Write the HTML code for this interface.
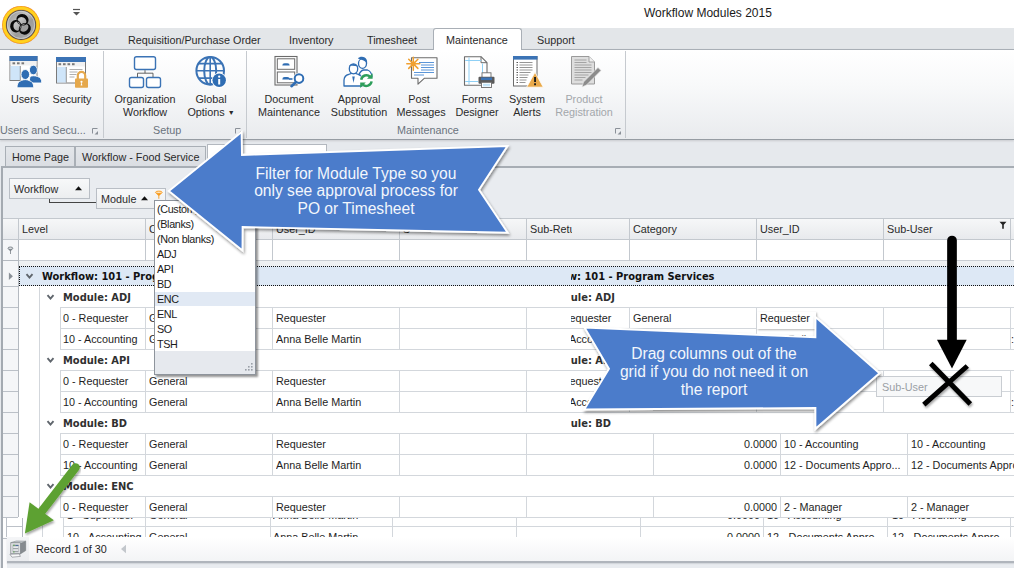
<!DOCTYPE html>
<html><head><meta charset="utf-8"><title>Workflow Modules 2015</title>
<style>
*{box-sizing:border-box;margin:0;padding:0}
html,body{width:1014px;height:568px;overflow:hidden;background:#e6e9ed}
body{position:relative;font-family:"Liberation Sans",sans-serif;font-size:10.8px;color:#1e1e1e}
.abs{position:absolute}
.t{position:absolute;white-space:nowrap;line-height:13px}
.b{font-family:"DejaVu Sans Condensed","DejaVu Sans","Liberation Sans",sans-serif;font-weight:bold;font-size:11px;color:#303030}
#titlebar{left:0;top:0;width:1014px;height:28px;background:#fff}
#tabbar{left:0;top:28px;width:1014px;height:22px;background:#e3e6e9}
#ribbon{left:0;top:49px;width:1014px;height:91px;background:linear-gradient(#ffffff 0%,#f8f9fa 40%,#e9ebee 100%);border-top:1px solid #a9afb6;border-bottom:1px solid #969ca3;box-shadow:0 1px 2px rgba(0,0,0,.13)}
.rtab{position:absolute;top:34px;white-space:nowrap;line-height:13px;color:#2a2a2a}
#acttab{left:433px;top:28px;width:89px;height:22px;background:#fff;border:1px solid #a9afb6;border-bottom:none;border-radius:3px 3px 0 0}
.sep{position:absolute;top:51px;width:1px;height:87px;background:#c6cacf}
.glabel{position:absolute;top:124px;white-space:nowrap;line-height:13px;color:#6a737d}
.blabel{position:absolute;text-align:center;white-space:nowrap;line-height:13px;top:93px;transform:translateX(-50%);color:#2a2a2a}
.dis{color:#a3a7ab}
.hl{position:absolute;height:1px;background:#d3d7dc}
.vl{position:absolute;width:1px;background:#d3d7dc}
.cell{position:absolute;white-space:nowrap;line-height:13px;overflow:hidden}
.pi{position:absolute;left:157px;white-space:nowrap;line-height:14px;font-size:10.8px;letter-spacing:-.35px;color:#1a1a1a}
</style></head><body>
<div id="titlebar" class="abs"></div>
<div class="t" style="left:644px;top:6px;font-size:12px;line-height:14px;color:#1a1a1a">Workflow Modules 2015</div>
<div id="tabbar" class="abs"></div>
<div id="ribbon" class="abs"></div>
<div id="acttab" class="abs"></div>
<div class="rtab" style="left:64px">Budget</div>
<div class="rtab" style="left:128px">Requisition/Purchase Order</div>
<div class="rtab" style="left:289px">Inventory</div>
<div class="rtab" style="left:367px">Timesheet</div>
<div class="rtab" style="left:446px">Maintenance</div>
<div class="rtab" style="left:537px">Support</div>
<div class="sep" style="left:103px"></div>
<div class="sep" style="left:246px"></div>
<div class="sep" style="left:625px"></div>
<div class="glabel" style="left:0px">Users and Secu...</div>
<div class="glabel" style="left:153px">Setup</div>
<div class="glabel" style="left:397px">Maintenance</div>
<div class="blabel" style="left:25px">Users</div>
<div class="blabel" style="left:72px">Security</div>
<div class="blabel" style="left:145px">Organization<br>Workflow</div>
<div class="blabel" style="left:211px">Global<br>Options <span style="font-size:7px;position:relative;top:-1px">&#9660;</span></div>
<div class="blabel" style="left:289px">Document<br>Maintenance</div>
<div class="blabel" style="left:359px">Approval<br>Substitution</div>
<div class="blabel" style="left:421px"><span style="position:relative;left:-2px">Post</span><br>Messages</div>
<div class="blabel" style="left:477px">Forms<br>Designer</div>
<div class="blabel" style="left:527px">System<br>Alerts</div>
<div class="blabel dis" style="left:584px">Product<br>Registration</div>
<svg class="abs" style="left:0;top:0" width="640" height="140" viewBox="0 0 640 140">
<defs>
<radialGradient id="lgR" cx="50%" cy="50%" r="50%"><stop offset="0" stop-color="#f5a31c"/><stop offset=".79" stop-color="#f5a31c"/><stop offset=".84" stop-color="#ffd320"/><stop offset=".93" stop-color="#ffd01c"/><stop offset=".975" stop-color="#f7a21a"/><stop offset="1" stop-color="#ea7a1a"/></radialGradient>
<linearGradient id="lgD" x1="0" y1="0" x2="1" y2="1"><stop offset="0" stop-color="#8a8a8a"/><stop offset=".4" stop-color="#c4c4c4"/><stop offset=".6" stop-color="#9a9a9a"/><stop offset="1" stop-color="#b5b5b5"/></linearGradient>
</defs>
<!-- logo -->
<circle cx="21.050" cy="24.900" r="19" fill="url(#lgR)"/>
<circle cx="21.050" cy="24.900" r="15" fill="#4a4a4a"/>
<circle cx="21.050" cy="24.900" r="14.200" fill="url(#lgD)"/>
<circle cx="21.050" cy="24.900" r="13.600" fill="none" stroke="#d9d9d9" stroke-width=".8" opacity=".8"/>
<g fill="#0a0a0a" fill-rule="evenodd">
<path id="bl" d="M16.300 19.700a6.200 5.700 0 1 0 12.400 0a6.200 5.700 0 1 0-12.400 0zM17.900 21a4.600 3.700 0 1 0 9.200 0a4.600 3.700 0 1 0-9.200 0z" transform="rotate(25 22.5 19.700)"/>
<use href="#bl" transform="rotate(120 21.050 24.900)"/>
<use href="#bl" transform="rotate(240 21.050 24.900)"/>
</g>
<!-- QAT -->
<path d="M73 9.500h7" stroke="#555" stroke-width="1.200"/><path d="M73 12h7l-3.500 3.500z" fill="#555"/>
<!-- Users -->
<rect x="10" y="56.500" width="27" height="24" fill="#fff" stroke="#7a7a7a" stroke-width="1"/>
<rect x="9.500" y="56" width="28" height="5" fill="#3b73b5"/>
<rect x="10.500" y="61" width="26" height="4.500" fill="#f1f1f1"/>
<rect x="12.500" y="62.300" width="2.600" height="2" fill="#7a7a7a"/><rect x="17" y="62.300" width="2.600" height="2" fill="#7a7a7a"/><rect x="21.500" y="62.300" width="2.600" height="2" fill="#7a7a7a"/>
<rect x="10.500" y="66" width="9.500" height="14" fill="#cfe5f9"/>
<path d="M20.300 66v14" stroke="#7a7a7a" stroke-width=".8"/>
<g fill="#2f6db3" stroke="#fff" stroke-width=".9">
<ellipse cx="33.400" cy="70" rx="4" ry="4.800"/>
<path d="M30 76.500c2-1 5-1 7.500 0 3 .8 4.300 3 4.300 6.500h-13z"/>
<ellipse cx="25.300" cy="74.500" rx="4.300" ry="5"/>
<path d="M17 87.800c0-4 1.200-6.500 4.500-7.300 2-1.200 5.500-1.200 7.500 0 3.400.8 4.800 3.300 4.800 7.300z"/>
</g>
<!-- Security -->
<rect x="56.500" y="57.500" width="29" height="25.500" fill="#fff" stroke="#7a7a7a" stroke-width="1"/>
<rect x="56" y="57" width="30" height="5" fill="#3b73b5"/>
<rect x="57" y="62" width="28" height="4.500" fill="#f1f1f1"/>
<rect x="58.500" y="63.200" width="2.600" height="2" fill="#7a7a7a"/><rect x="63" y="63.200" width="2.600" height="2" fill="#7a7a7a"/><rect x="67.500" y="63.200" width="2.600" height="2" fill="#7a7a7a"/><rect x="72" y="63.200" width="2.600" height="2" fill="#7a7a7a"/>
<rect x="57" y="67" width="9" height="15.500" fill="#cfe5f9"/>
<path d="M66.300 67v15.500" stroke="#7a7a7a" stroke-width=".8"/>
<path d="M69.500 69.500h13M69.500 72h8M69.500 74.500h7M69.500 77h5" stroke="#9a9a9a" stroke-width=".8"/>
<path d="M77.800 79v-3.300a3.700 3.900 0 0 1 7.400 0V79" fill="none" stroke="#e5a84c" stroke-width="2.200"/>
<rect x="75" y="78.500" width="13" height="9.300" rx=".8" fill="#e5a84c"/>
<circle cx="81.500" cy="81.800" r="1.100" fill="#fff"/><path d="M81.500 82l-.9 3.500h1.800z" fill="#fff"/>
<!-- Organization Workflow -->
<g fill="#fff" stroke="#3b73b5" stroke-width="1.400">
<rect x="134.500" y="56.700" width="21" height="12.800" rx="2"/>
<rect x="129.500" y="77.500" width="14" height="10" rx="2"/>
<rect x="146.500" y="77.500" width="14" height="10" rx="2"/>
</g>
<path d="M145 70.200v3M137.500 77v-3.800h15.500V77" fill="none" stroke="#555" stroke-width=".9"/>
<!-- Global options -->
<g fill="none" stroke="#3b73b5" stroke-width="2">
<circle cx="210.200" cy="70.800" r="13.800"/>
<ellipse cx="210.200" cy="70.800" rx="6" ry="13.800"/>
<path d="M210.200 57v27.600M196.400 70.800h27.600M198.700 63.600h23M198.700 78.100h23" stroke-width="1.600"/>
</g>
<circle cx="219.200" cy="80.300" r="7.600" fill="#fff"/>
<circle cx="219.200" cy="80.300" r="6.700" fill="#2f6db3"/>
<rect x="218.200" y="79" width="2" height="5.500" fill="#fff"/><circle cx="219.200" cy="76.700" r="1.150" fill="#fff"/>
<!-- Document Maintenance -->
<rect x="275" y="56.500" width="22" height="28.500" fill="#fff" stroke="#6b6b6b" stroke-width="1.100"/>
<rect x="277.300" y="58.800" width="17.400" height="10.500" fill="#fff" stroke="#6b6b6b" stroke-width="1"/>
<rect x="277.300" y="72" width="17.400" height="10.800" fill="#fff" stroke="#6b6b6b" stroke-width="1"/>
<path d="M282.300 65.600a2.300 2.300 0 0 1 2.300-2.300h2.800a2.300 2.300 0 0 1 2.300 2.300z" fill="#2f6db3"/>
<path d="M282.300 79.400a2.300 2.300 0 0 1 2.300-2.300h2.800a2.300 2.300 0 0 1 2.300 2.300z" fill="#2f6db3"/>
<circle cx="299" cy="78.600" r="5.800" fill="#fff"/>
<circle cx="299" cy="78.600" r="4.300" fill="#fff" stroke="#2f6db3" stroke-width="2"/>
<path d="M295.800 82.200l-4.300 4" stroke="#2f6db3" stroke-width="2.600" stroke-linecap="round"/>
<path d="M289 79h3.500" stroke="#2f6db3" stroke-width="1.600"/>
<!-- Approval Substitution -->
<g fill="#fff" stroke="#2f6db3" stroke-width="1.300" stroke-linejoin="round">
<path d="M358.500 75.500c1.500-3.500 2.500-5 5-5.500l4 0c2.500.8 4 3 4.500 6.500v6h-13z"/>
<ellipse cx="362.500" cy="63.500" rx="4" ry="4.800"/>
<path d="M344 86v-6c.3-3 1.500-4.800 4.500-5.500l3-1.200h4l3 1.200c3 .8 4 2.500 4.300 5.500v6z"/>
<ellipse cx="353.500" cy="68.800" rx="4.200" ry="5"/>
</g>
<path d="M357.800 58.500c2-2.500 7.500-2.500 9 1.500.6 2 .3 3.500.3 3.500-1.500-2.500-5-3.800-9.300-5z" fill="#2f6db3"/>
<path d="M349 66c1.500-2.800 7.500-3 8.800.5-2.500-.8-6-.8-8.800-.5z" fill="#2f6db3"/>
<path d="M352.200 76.500l1.300 6.500 1.300-6.500z" fill="#2f6db3"/>
<circle cx="366.400" cy="80.600" r="7.200" fill="#fff"/>
<g fill="none" stroke="#2e9e5b" stroke-width="2.500">
<path d="M361.200 79.800a5.300 5.300 0 0 1 9-3"/>
<path d="M371.600 81.400a5.300 5.300 0 0 1-9 3"/>
</g>
<path d="M372.600 73.200v5.600h-5.600z" fill="#2e9e5b"/><path d="M360.200 88v-5.600h5.600z" fill="#2e9e5b"/>
<!-- Post Messages -->
<path d="M411.500 57.700h25.500v20.500h-12.500l-6.500 6v-6h-6.500z" fill="#fff" stroke="#6b6b6b" stroke-width="1.100" stroke-linejoin="round"/>
<path d="M419 62.500h15M421 65h13M421 67.500h13M421 70h13M414 72.500h20M414 75h10" stroke="#4a8ad4" stroke-width=".9"/>
<g stroke="#f0a030" stroke-width="1.500" stroke-linecap="round"><path d="M413.300 57.300v13M406.800 63.800h13M408.700 59.200l9.200 9.200M417.900 59.200l-9.200 9.200"/></g>
<circle cx="413.300" cy="63.800" r="2.300" fill="#f0a030"/>
<!-- Forms Designer -->
<path d="M464.500 56.700h16.500l6 6v22.500h-22.500z" fill="#fff" stroke="#6b6b6b" stroke-width="1.100" stroke-linejoin="round"/>
<path d="M481 56.700v6h6" fill="none" stroke="#6b6b6b" stroke-width="1"/>
<path d="M469 57.500v27M482.500 63.500v10M465.200 60.500h16M465.200 81.500h13" stroke="#8fd0f5" stroke-width="1"/>
<rect x="482" y="72.800" width="9" height="5" fill="#fff" stroke="#6b6b6b" stroke-width=".9"/>
<rect x="478.500" y="76.800" width="16" height="7" rx="1" fill="#5a5a5a"/>
<rect x="481" y="77.500" width="11" height="2.600" fill="#3b73b5"/>
<rect x="481.500" y="82.300" width="10" height="5.200" fill="#fff" stroke="#6b6b6b" stroke-width=".9"/>
<path d="M483 84.300h7M483 85.800h7" stroke="#8fd0f5" stroke-width=".7"/>
<!-- System Alerts -->
<rect x="513.500" y="56.500" width="23.500" height="29.500" fill="#fff" stroke="#6b6b6b" stroke-width="1"/>
<rect x="513" y="56" width="24.500" height="3.600" fill="#3b73b5"/>
<g stroke="#8a8a8a" stroke-width=".9"><path d="M519.500 62.500h13M519.500 65h13M519.500 67.500h13M519.500 70h13M519.500 72.500h11M519.500 75h9M519.500 77.500h8M519.500 80h7M519.500 82.500h6"/></g>
<g stroke="#444" stroke-width=".9"><path d="M516.500 62.500h1.500M516.500 65h1.500M516.500 67.500h1.500M516.500 70h1.500M516.500 72.500h1.500M516.500 75h1.500M516.500 77.500h1.500M516.500 80h1.500M516.500 82.500h1.500"/></g>
<path d="M535 72.300l8.300 14.900h-16.600z" fill="#e9a94a" stroke="#fff" stroke-width=".8" stroke-linejoin="round"/>
<rect x="534.100" y="77" width="1.900" height="5" fill="#1a1a1a"/><rect x="534.100" y="83.300" width="1.900" height="1.900" fill="#1a1a1a"/>
<!-- Product Registration (disabled) -->
<path d="M571.500 56.500h17.500l5.500 5.500v22h-23z" fill="#dedede" stroke="#9a9a9a" stroke-width="1" stroke-linejoin="round"/>
<path d="M589 56.500v5.500h5.500" fill="#efefef" stroke="#9a9a9a" stroke-width=".9"/>
<g stroke="#9d9d9d" stroke-width=".9"><path d="M574.500 60h12M574.500 62.500h12M574.500 65h17M574.500 67.500h17M574.500 70h17M574.500 72.500h17M574.500 75h14M574.500 77.500h11M574.500 80h8"/></g>
<path d="M598 67.500l3 3-14.500 14.500-4.500 2 1.500-5z" fill="#8c8c8c" stroke="#e8e8e8" stroke-width=".7"/>
<!-- dialog launchers -->
<g fill="none" stroke="#8a9098" stroke-width="1"><path d="M97.500 128.500h-5v5M240.500 128.500h-5v5M620.500 128.500h-5v5"/></g>
<g fill="#8a9098"><path d="M98 134.500h-3.500l3.500-3.500zM241 134.500h-3.500l3.500-3.500zM621 134.500h-3.500l3.500-3.500z"/></g>
</svg>
<div class="abs" style="left:5px;top:146px;width:70px;height:21px;background:linear-gradient(#e3e6ea,#dadde2);border:1px solid #a9afb6;border-bottom:none"></div>
<div class="t" style="left:12px;top:151px;color:#2a2a2a">Home Page</div>
<div class="abs" style="left:75px;top:146px;width:131px;height:21px;background:linear-gradient(#e3e6ea,#dadde2);border:1px solid #a9afb6;border-bottom:none"></div>
<div class="t" style="left:82px;top:151px;color:#2a2a2a">Workflow - Food Service</div>
<div class="abs" style="left:1px;top:166px;width:1013px;height:402px;background:#e9ecf0;border-left:2px solid #a4aab1;border-top:2px solid #a7adb4"></div>
<div class="abs" style="left:207px;top:144px;width:120px;height:23px;background:#fff;border:1px solid #b3b8bf;border-bottom:none"></div>
<div class="t" style="left:214px;top:154px;color:#2a2a2a">Workflow - Administration</div>

<div class="abs" style="left:49px;top:198px;width:48px;height:5px;border-left:1px solid #444;border-bottom:1px solid #444"></div>
<div class="abs" style="left:9px;top:178px;width:81px;height:21px;background:linear-gradient(#f7f8f9,#eceef0);border:1px solid #b9bec5"></div>
<div class="t" style="left:14px;top:183px;color:#2a2a2a">Workflow</div>
<svg class="abs" style="left:75px;top:186px" width="7" height="5" viewBox="0 0 7 5"><path d="M0 4.300h7L3.500 .3z" fill="#111"/></svg>
<div class="abs" style="left:96px;top:188px;width:70px;height:21px;background:linear-gradient(#f7f8f9,#eceef0);border:1px solid #b9bec5"></div>
<div class="t" style="left:101px;top:193px;color:#2a2a2a">Module</div>
<svg class="abs" style="left:141px;top:196px" width="7" height="5" viewBox="0 0 7 5"><path d="M0 4.300h7L3.500 .3z" fill="#111"/></svg>
<svg class="abs" style="left:154px;top:190px" width="10" height="10" viewBox="0 0 10 10"><path d="M1.200 2.400L4.400 5.800v3h.9v-3L8.500 2.400z" fill="#f79a1c"/><ellipse cx="4.850" cy="2.300" rx="3.300" ry="1.200" fill="#ffe6bf" stroke="#f79a1c" stroke-width=".9"/></svg>

<div class="abs" style="left:3px;top:218px;width:1011px;height:22px;background:linear-gradient(#f6f7f8,#e8eaed);border-top:1px solid #c3c8ce;border-bottom:1px solid #c3c8ce"></div>
<div class="abs" style="left:3px;top:240px;width:1011px;height:297px;background:#fff"></div>
<div class="hl" style="left:3px;top:260px;width:1011px;background:#c9cdd3"></div>
<div class="abs" style="left:3px;top:261px;width:1011px;height:5px;background:#eef0f2"></div>
<div class="vl" style="left:18px;top:219px;height:42px;background:#c3c8ce"></div>
<div class="vl" style="left:145px;top:219px;height:42px;background:#c3c8ce"></div>
<div class="vl" style="left:272px;top:219px;height:42px;background:#c3c8ce"></div>
<div class="vl" style="left:399px;top:219px;height:42px;background:#c3c8ce"></div>
<div class="vl" style="left:526px;top:219px;height:42px;background:#c3c8ce"></div>
<div class="vl" style="left:629px;top:219px;height:42px;background:#c3c8ce"></div>
<div class="vl" style="left:756px;top:219px;height:42px;background:#c3c8ce"></div>
<div class="vl" style="left:883px;top:219px;height:42px;background:#c3c8ce"></div>
<div class="vl" style="left:1010px;top:219px;height:42px;background:#c3c8ce"></div>
<div class="cell" style="left:22px;top:223px;width:120px;color:#2a2a2a">Level</div>
<div class="cell" style="left:149px;top:223px;width:120px;color:#2a2a2a">Category</div>
<div class="cell" style="left:276px;top:223px;width:120px;color:#2a2a2a">User_ID</div>
<div class="cell" style="left:403px;top:223px;width:7px;color:#2a2a2a">Sub-User</div>
<div class="cell" style="left:530px;top:223px;width:42px;color:#2a2a2a">Sub-Retu</div>
<div class="cell" style="left:633px;top:223px;width:120px;color:#2a2a2a">Category</div>
<div class="cell" style="left:760px;top:223px;width:120px;color:#2a2a2a">User_ID</div>
<div class="cell" style="left:887px;top:223px;width:120px;color:#2a2a2a">Sub-User</div>
<svg class="abs" style="left:6px;top:245px;z-index:2" width="9" height="10" viewBox="0 0 9 10"><path d="M2 3.300L4 6.200v2.800h.8V6.200L6.800 3.300z" fill="#7b8188"/><ellipse cx="4.400" cy="3.300" rx="2.400" ry="1.300" fill="#d9dce0" stroke="#7b8188" stroke-width=".9"/></svg>
<svg class="abs" style="left:999px;top:221px" width="8" height="9" viewBox="0 0 8 9"><path d="M.5 .8h7L4.8 3.8v4h-1.6v-4z" fill="#222"/></svg>
<div class="abs" style="left:19px;top:266px;width:995px;height:20px;background:#dde8f5;border-top:1px dotted #111;border-bottom:1px dotted #111;border-left:1px dotted #111"></div>
<div class="t b" style="left:42px;top:270px;color:#111">Workflow: 101 - Program Services</div>
<div class="cell b" style="left:571px;top:270px;width:300px;color:#111"><span style="margin-left:-46px">Workflow: 101 - Program Services</span></div>
<div class="abs" style="left:3px;top:240px;width:15px;height:277px;background:#f5f6f8"></div>
<div class="vl" style="left:18px;top:240px;height:277px;background:#b4b9c0"></div>
<div class="hl" style="left:3px;top:260px;width:15px;background:#b4b9c0"></div>
<div class="hl" style="left:3px;top:286px;width:15px;background:#bcc1c8"></div>
<svg class="abs" style="left:8px;top:272px;z-index:2" width="6" height="9" viewBox="0 0 6 9"><path d="M.9 .6v7.400L4.900 4.300z" fill="#8a9097"/></svg>
<svg class="abs" style="left:25px;top:273px" width="9" height="7" viewBox="0 0 9 7"><path d="M1.500 1.200L4.500 4.600 7.500 1.200" fill="none" stroke="#5f656c" stroke-width="1.900"/></svg>
<div class="hl" style="left:3px;top:307px;width:15px;background:#bcc1c8"></div>
<svg class="abs" style="left:46px;top:294px" width="9" height="7" viewBox="0 0 9 7"><path d="M1.500 1.200L4.500 4.600 7.500 1.200" fill="none" stroke="#5f656c" stroke-width="1.900"/></svg>
<div class="t b" style="left:63px;top:291px">Module: ADJ</div>
<div class="cell b" style="left:571px;top:291px;width:200px"><span style="margin-left:-24px">Module: ADJ</span></div>
<div class="hl" style="left:60px;top:307px;width:954px"></div>
<div class="hl" style="left:3px;top:328px;width:15px;background:#bcc1c8"></div>
<div class="hl" style="left:60px;top:328px;width:954px"></div>
<div class="cell" style="left:63px;top:312px;width:80px">0 - Requester</div>
<div class="cell" style="left:149px;top:312px;width:120px">General</div>
<div class="cell" style="left:276px;top:312px;width:120px">Requester</div>
<div class="vl" style="left:60px;top:308px;height:20px"></div>
<div class="vl" style="left:145px;top:308px;height:20px"></div>
<div class="vl" style="left:272px;top:308px;height:20px"></div>
<div class="vl" style="left:399px;top:308px;height:20px"></div>
<div class="vl" style="left:526px;top:308px;height:20px"></div>
<div class="hl" style="left:3px;top:349px;width:15px;background:#bcc1c8"></div>
<div class="hl" style="left:60px;top:349px;width:954px"></div>
<div class="cell" style="left:63px;top:333px;width:80px">10 - Accounting</div>
<div class="cell" style="left:149px;top:333px;width:120px">General</div>
<div class="cell" style="left:276px;top:333px;width:120px">Anna Belle Martin</div>
<div class="vl" style="left:60px;top:329px;height:20px"></div>
<div class="vl" style="left:145px;top:329px;height:20px"></div>
<div class="vl" style="left:272px;top:329px;height:20px"></div>
<div class="vl" style="left:399px;top:329px;height:20px"></div>
<div class="vl" style="left:526px;top:329px;height:20px"></div>
<div class="hl" style="left:3px;top:370px;width:15px;background:#bcc1c8"></div>
<svg class="abs" style="left:46px;top:357px" width="9" height="7" viewBox="0 0 9 7"><path d="M1.500 1.200L4.500 4.600 7.500 1.200" fill="none" stroke="#5f656c" stroke-width="1.900"/></svg>
<div class="t b" style="left:63px;top:354px">Module: API</div>
<div class="cell b" style="left:571px;top:354px;width:200px"><span style="margin-left:-24px">Module: API</span></div>
<div class="hl" style="left:60px;top:370px;width:954px"></div>
<div class="hl" style="left:3px;top:391px;width:15px;background:#bcc1c8"></div>
<div class="hl" style="left:60px;top:391px;width:954px"></div>
<div class="cell" style="left:63px;top:375px;width:80px">0 - Requester</div>
<div class="cell" style="left:149px;top:375px;width:120px">General</div>
<div class="cell" style="left:276px;top:375px;width:120px">Requester</div>
<div class="vl" style="left:60px;top:371px;height:20px"></div>
<div class="vl" style="left:145px;top:371px;height:20px"></div>
<div class="vl" style="left:272px;top:371px;height:20px"></div>
<div class="vl" style="left:399px;top:371px;height:20px"></div>
<div class="vl" style="left:526px;top:371px;height:20px"></div>
<div class="hl" style="left:3px;top:412px;width:15px;background:#bcc1c8"></div>
<div class="hl" style="left:60px;top:412px;width:954px"></div>
<div class="cell" style="left:63px;top:396px;width:80px">10 - Accounting</div>
<div class="cell" style="left:149px;top:396px;width:120px">General</div>
<div class="cell" style="left:276px;top:396px;width:120px">Anna Belle Martin</div>
<div class="vl" style="left:60px;top:392px;height:20px"></div>
<div class="vl" style="left:145px;top:392px;height:20px"></div>
<div class="vl" style="left:272px;top:392px;height:20px"></div>
<div class="vl" style="left:399px;top:392px;height:20px"></div>
<div class="vl" style="left:526px;top:392px;height:20px"></div>
<div class="hl" style="left:3px;top:433px;width:15px;background:#bcc1c8"></div>
<svg class="abs" style="left:46px;top:420px" width="9" height="7" viewBox="0 0 9 7"><path d="M1.500 1.200L4.500 4.600 7.500 1.200" fill="none" stroke="#5f656c" stroke-width="1.900"/></svg>
<div class="t b" style="left:63px;top:417px">Module: BD</div>
<div class="cell b" style="left:571px;top:417px;width:200px"><span style="margin-left:-24px">Module: BD</span></div>
<div class="hl" style="left:60px;top:433px;width:954px"></div>
<div class="hl" style="left:3px;top:454px;width:15px;background:#bcc1c8"></div>
<div class="hl" style="left:60px;top:454px;width:954px"></div>
<div class="cell" style="left:63px;top:438px;width:80px">0 - Requester</div>
<div class="cell" style="left:149px;top:438px;width:120px">General</div>
<div class="cell" style="left:276px;top:438px;width:120px">Requester</div>
<div class="vl" style="left:60px;top:434px;height:20px"></div>
<div class="vl" style="left:145px;top:434px;height:20px"></div>
<div class="vl" style="left:272px;top:434px;height:20px"></div>
<div class="vl" style="left:399px;top:434px;height:20px"></div>
<div class="vl" style="left:526px;top:434px;height:20px"></div>
<div class="hl" style="left:3px;top:475px;width:15px;background:#bcc1c8"></div>
<div class="hl" style="left:60px;top:475px;width:954px"></div>
<div class="cell" style="left:63px;top:459px;width:80px">10 - Accounting</div>
<div class="cell" style="left:149px;top:459px;width:120px">General</div>
<div class="cell" style="left:276px;top:459px;width:120px">Anna Belle Martin</div>
<div class="vl" style="left:60px;top:455px;height:20px"></div>
<div class="vl" style="left:145px;top:455px;height:20px"></div>
<div class="vl" style="left:272px;top:455px;height:20px"></div>
<div class="vl" style="left:399px;top:455px;height:20px"></div>
<div class="vl" style="left:526px;top:455px;height:20px"></div>
<div class="hl" style="left:3px;top:496px;width:15px;background:#bcc1c8"></div>
<svg class="abs" style="left:46px;top:483px" width="9" height="7" viewBox="0 0 9 7"><path d="M1.500 1.200L4.500 4.600 7.500 1.200" fill="none" stroke="#5f656c" stroke-width="1.900"/></svg>
<div class="t b" style="left:63px;top:480px">Module: ENC</div>
<div class="hl" style="left:60px;top:496px;width:954px"></div>
<div class="hl" style="left:3px;top:517px;width:15px;background:#bcc1c8"></div>
<div class="hl" style="left:60px;top:517px;width:954px"></div>
<div class="cell" style="left:63px;top:501px;width:80px">0 - Requester</div>
<div class="cell" style="left:149px;top:501px;width:120px">General</div>
<div class="cell" style="left:276px;top:501px;width:120px">Requester</div>
<div class="vl" style="left:60px;top:497px;height:20px"></div>
<div class="vl" style="left:145px;top:497px;height:20px"></div>
<div class="vl" style="left:272px;top:497px;height:20px"></div>
<div class="vl" style="left:399px;top:497px;height:20px"></div>
<div class="vl" style="left:526px;top:497px;height:20px"></div>
<div class="vl" style="left:39px;top:287px;height:250px"></div>
<div class="cell" style="left:571px;top:312px;width:56px"><span style="margin-left:-25px">0 - Requester</span></div>
<div class="vl" style="left:629px;top:308px;height:20px"></div>
<div class="vl" style="left:756px;top:308px;height:20px"></div>
<div class="vl" style="left:883px;top:308px;height:20px"></div>
<div class="vl" style="left:1010px;top:308px;height:20px"></div>
<div class="cell" style="left:633px;top:312px;width:120px">General</div>
<div class="cell" style="left:760px;top:312px;width:120px">Requester</div>
<div class="cell" style="left:571px;top:333px;width:56px"><span style="margin-left:-23px">10 - Accounting</span></div>
<div class="vl" style="left:629px;top:329px;height:20px"></div>
<div class="vl" style="left:756px;top:329px;height:20px"></div>
<div class="vl" style="left:883px;top:329px;height:20px"></div>
<div class="vl" style="left:1010px;top:329px;height:20px"></div>
<div class="cell" style="left:571px;top:375px;width:56px"><span style="margin-left:-25px">0 - Requester</span></div>
<div class="vl" style="left:629px;top:371px;height:20px"></div>
<div class="vl" style="left:756px;top:371px;height:20px"></div>
<div class="vl" style="left:883px;top:371px;height:20px"></div>
<div class="vl" style="left:1010px;top:371px;height:20px"></div>
<div class="cell" style="left:571px;top:396px;width:56px"><span style="margin-left:-23px">10 - Accounting</span></div>
<div class="vl" style="left:629px;top:392px;height:20px"></div>
<div class="vl" style="left:756px;top:392px;height:20px"></div>
<div class="vl" style="left:883px;top:392px;height:20px"></div>
<div class="vl" style="left:1010px;top:392px;height:20px"></div>
<div class="vl" style="left:653px;top:434px;height:20px"></div>
<div class="vl" style="left:780px;top:434px;height:20px"></div>
<div class="vl" style="left:907px;top:434px;height:20px"></div>
<div class="cell" style="left:700px;top:438px;width:77px;text-align:right">0.0000</div>
<div class="cell" style="left:784px;top:438px;width:120px">10 - Accounting</div>
<div class="cell" style="left:911px;top:438px;width:103px">10 - Accounting</div>
<div class="vl" style="left:653px;top:455px;height:20px"></div>
<div class="vl" style="left:780px;top:455px;height:20px"></div>
<div class="vl" style="left:907px;top:455px;height:20px"></div>
<div class="cell" style="left:700px;top:459px;width:77px;text-align:right">0.0000</div>
<div class="cell" style="left:784px;top:459px;width:120px">12 - Documents Appro...</div>
<div class="cell" style="left:911px;top:459px;width:103px">12 - Documents Approval</div>
<div class="vl" style="left:653px;top:497px;height:20px"></div>
<div class="vl" style="left:780px;top:497px;height:20px"></div>
<div class="vl" style="left:907px;top:497px;height:20px"></div>
<div class="cell" style="left:700px;top:501px;width:77px;text-align:right">0.0000</div>
<div class="cell" style="left:784px;top:501px;width:120px">2 - Manager</div>
<div class="cell" style="left:911px;top:501px;width:103px">2 - Manager</div>
<div class="cell" style="left:760px;top:333px;width:56px">Anna Belle Martin</div>
<div class="abs" style="left:757px;top:312px;width:59px;height:17px;background:#fff;box-shadow:1px 1px 2px rgba(0,0,0,.3)"></div><div class="t" style="left:760px;top:312px">Requester</div>
<div class="t" style="left:1011px;top:333px">:</div><div class="t" style="left:1011px;top:396px">:</div>
<div class="abs" style="left:3px;top:518px;width:1011px;height:19px;background:#fff;overflow:hidden">
<div class="hl" style="left:3px;top:8px;width:16px;background:#bcc1c8"></div>
<div class="hl" style="left:60px;top:8px;width:951px"></div>
<div class="vl" style="left:3px;top:0;height:20px;background:#bcc1c8"></div>
<div class="vl" style="left:19px;top:0;height:20px;background:#b4b9c0"></div>
<div class="vl" style="left:39px;top:0;height:20px;background:#d3d7dc"></div>
<div class="vl" style="left:60px;top:0;height:20px;background:#d3d7dc"></div>
<div class="vl" style="left:142px;top:0;height:20px;background:#d3d7dc"></div>
<div class="vl" style="left:267px;top:0;height:20px;background:#d3d7dc"></div>
<div class="vl" style="left:389px;top:0;height:20px;background:#d3d7dc"></div>
<div class="vl" style="left:513px;top:0;height:20px;background:#d3d7dc"></div>
<div class="vl" style="left:637px;top:0;height:20px;background:#d3d7dc"></div>
<div class="vl" style="left:760px;top:0;height:20px;background:#d3d7dc"></div>
<div class="vl" style="left:884px;top:0;height:20px;background:#d3d7dc"></div>
<div class="vl" style="left:1007px;top:0;height:20px;background:#d3d7dc"></div>
<div class="cell" style="left:64px;top:-9px;width:78px;text-align:left">1 - Supervisor</div>
<div class="cell" style="left:146px;top:-9px;width:120px;text-align:left">General</div>
<div class="cell" style="left:270px;top:-9px;width:118px;text-align:left">Anna Belle Martin</div>
<div class="cell" style="left:680px;top:-9px;width:77px;text-align:right">0.0000</div>
<div class="cell" style="left:764px;top:-9px;width:120px;text-align:left">10 - Accounting</div>
<div class="cell" style="left:889px;top:-9px;width:120px;text-align:left">10 - Accounting</div>
<div class="cell" style="left:64px;top:13px;width:78px;text-align:left">10 - Accounting</div>
<div class="cell" style="left:146px;top:13px;width:120px;text-align:left">General</div>
<div class="cell" style="left:270px;top:13px;width:118px;text-align:left">Anna Belle Martin</div>
<div class="cell" style="left:680px;top:13px;width:77px;text-align:right">0.0000</div>
<div class="cell" style="left:764px;top:13px;width:120px;text-align:left">12 - Documents Appro...</div>
<div class="cell" style="left:889px;top:13px;width:120px;text-align:left">12 - Documents Appro...</div>
</div>
<div class="abs" style="left:3px;top:537px;width:4px;height:31px;background:#fbfbfc"></div><div class="hl" style="left:3px;top:538px;width:4px;background:#bcc1c8"></div>
<div class="abs" style="left:7px;top:537px;width:1007px;height:26px;background:linear-gradient(#ffffff,#f3f4f6);border-bottom:2px solid #b0b5bc;box-shadow:0 1px 1px #d3d7dc"></div>
<div class="abs" style="left:7px;top:537px;width:22px;height:24px;background:linear-gradient(#f4f5f7,#eaecef)"></div>
<div class="t" style="left:36px;top:543px;color:#1e1e1e">Record 1 of 30</div>
<svg class="abs" style="left:120px;top:544px" width="7" height="10" viewBox="0 0 7 10"><path d="M6 .8v8.4L1 5z" fill="#c3c7cc"/></svg>
<svg class="abs" style="left:8px;top:539px" width="20" height="20" viewBox="8 539 20 20"><polygon points="20.300,543.600 25.700,541.200 25.700,550.600 20.300,554" fill="#868b90" stroke="#6d7277" stroke-width=".5"/><polygon points="10.800,542.600 16.500,540.900 25.700,541.200 20.300,543.600" fill="#c4c8cc" stroke="#7d8287" stroke-width=".5"/><rect x="10.800" y="542.800" width="9.500" height="11" fill="#e2e4e7" stroke="#7d8287" stroke-width=".7"/><rect x="12.600" y="544.600" width="6" height="7.600" fill="#9ea3a8"/><rect x="13.200" y="546.300" width="5" height="1.700" fill="#e9ebed"/><rect x="13.200" y="549.200" width="5" height="1.700" fill="#e9ebed"/><rect x="13" y="544.800" width="1.800" height=".9" fill="#57a64a"/><rect x="15.500" y="545" width="3" height=".8" fill="#3d5f9a"/><rect x="13" y="551.600" width="1.600" height=".8" fill="#57a64a"/><polygon points="9.900,554.300 19.200,553.900 20.400,556.400 12,557.200" fill="#f6f7f8" stroke="#7d8287" stroke-width=".6"/></svg>
<div class="abs" style="left:154px;top:200px;width:102px;height:175px;background:#fff;border:1px solid #8e949c;box-shadow:2px 2px 2px rgba(0,0,0,.42)"></div>
<div class="abs" style="left:155px;top:292px;width:100px;height:14px;background:#e1e9f4"></div>
<div class="abs" style="left:155px;top:351px;width:100px;height:23px;background:#e6e9ee"></div>
<div class="pi" style="top:202px">(Custom)</div>
<div class="pi" style="top:217px">(Blanks)</div>
<div class="pi" style="top:232px">(Non blanks)</div>
<div class="pi" style="top:247px">ADJ</div>
<div class="pi" style="top:262px">API</div>
<div class="pi" style="top:277px">BD</div>
<div class="pi" style="top:292px">ENC</div>
<div class="pi" style="top:307px">ENL</div>
<div class="pi" style="top:322px">SO</div>
<div class="pi" style="top:337px">TSH</div>
<svg class="abs" style="left:244px;top:362px" width="10" height="10" viewBox="0 0 10 10"><g fill="#9aa0a8"><rect x="7" y="1" width="1.6" height="1.6"/><rect x="4" y="4" width="1.6" height="1.6"/><rect x="7" y="4" width="1.6" height="1.6"/><rect x="1" y="7" width="1.6" height="1.6"/><rect x="4" y="7" width="1.6" height="1.6"/><rect x="7" y="7" width="1.6" height="1.6"/></g></svg>
<svg class="abs" style="left:0;top:0" width="1014" height="568" viewBox="0 0 1014 568">
<defs><filter id="sh" x="-10%" y="-10%" width="120%" height="130%"><feGaussianBlur in="SourceAlpha" stdDeviation="1.5"/><feOffset dx="1" dy="2.200"/><feComponentTransfer><feFuncA type="linear" slope=".45"/></feComponentTransfer><feMerge><feMergeNode/><feMergeNode in="SourceGraphic"/></feMerge></filter><filter id="sh2" x="-10%" y="-10%" width="120%" height="130%"><feGaussianBlur in="SourceAlpha" stdDeviation="1"/><feOffset dx=".5" dy="1.5"/><feComponentTransfer><feFuncA type="linear" slope=".35"/></feComponentTransfer><feMerge><feMergeNode/><feMergeNode in="SourceGraphic"/></feMerge></filter></defs>
<rect x="876.5" y="376.5" width="125" height="20" fill="#f7f8f9" stroke="#c9cdd2"/>
<text x="882" y="391" font-size="10.8" fill="#9a9fa5" font-family="Liberation Sans, sans-serif">Sub-User</text>
<polygon filter="url(#sh)" points="168.800,191 241.600,131.900 242,154.900 507.500,146 479,189.800 507.700,232.800 242.600,227 242.500,250.400" fill="#4c7ccb" stroke="#fff" stroke-width="1.900" stroke-linejoin="miter"/>
<polygon filter="url(#sh)" points="584.500,327.500 815.400,337.300 815.500,317 879.500,373.200 815.400,428.800 815.400,408 584.200,409.500 609,368.700" fill="#4c7ccb" stroke="#fff" stroke-width="1.900" stroke-linejoin="miter"/>
<g font-family="Liberation Sans, sans-serif" font-size="15.6" fill="#f2f6fc" text-anchor="middle"><text x="356" y="178.5">Filter for Module Type so you</text><text x="356" y="196">only see approval process for</text><text x="356" y="213.5">PO or Timesheet</text></g>
<g font-family="Liberation Sans, sans-serif" font-size="15.6" fill="#f2f6fc" text-anchor="middle"><text x="714" y="358.5">Drag columns out of the</text><text x="714" y="376.5">grid if you do not need it on</text><text x="714" y="394.5">the report</text></g>
<path d="M952 240.500v100" stroke="#000" stroke-width="9.700" stroke-linecap="round"/>
<polygon points="937,339.7 966.7,339.7 952,368.6" fill="#000"/>
<path filter="url(#sh2)" d="M930.8 363.400L970.3 404M967.3 366L923.8 404.600" stroke="#000" stroke-width="5"/>
<g filter="url(#sh2)"><path d="M75.500 467.500L42 511" stroke="#5da130" stroke-width="8.600" stroke-linecap="round"/><polygon points="24.900,533.400 29.600,502.300 53.900,520.300" fill="#5da130"/></g>
</svg>
</body></html>
